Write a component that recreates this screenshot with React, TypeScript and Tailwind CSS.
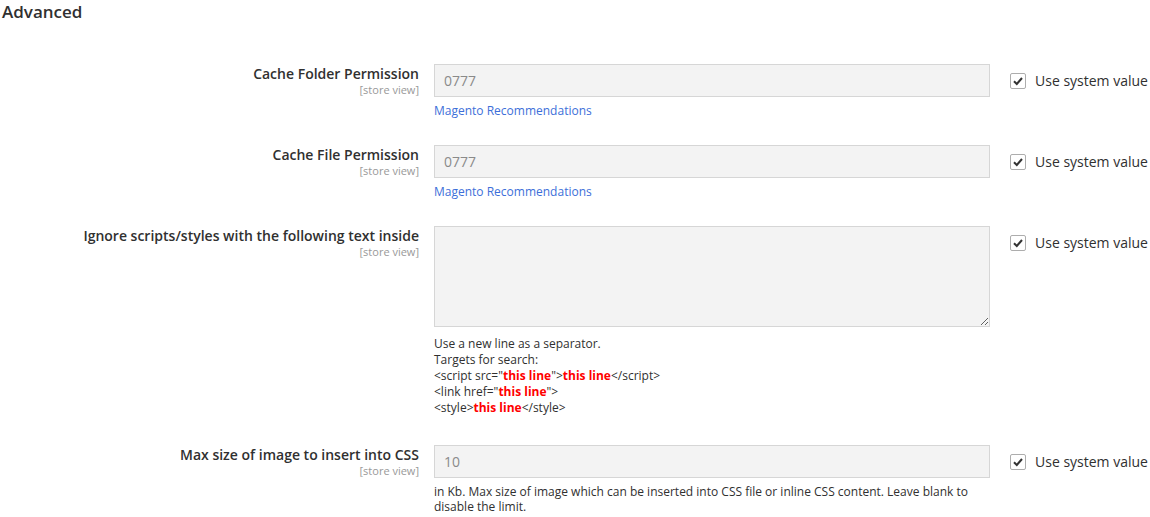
import React from 'react';

const font = { fontFamily: '"Open Sans", "Liberation Sans", sans-serif' };

function Checkbox() {
    return (
        <label className="flex items-center gap-[9px] text-[14px] text-[#303030] whitespace-nowrap">
            <span className="w-[16px] h-[16px] border border-[#adadad] rounded-[2px] bg-white flex items-center justify-center">
                <svg width="12" height="12" viewBox="0 0 12 12">
                    <path d="M2 6.2 L4.8 9 L10 3" fill="none" stroke="#333" strokeWidth="2" />
                </svg>
            </span>
            Use system value
        </label>
    );
}

function Label({ title }: { title: string }) {
    return (
        <div className="w-[419px] shrink-0 text-right">
            <div className="text-[14px] font-semibold text-[#303030] leading-[20px]">{title}</div>
            <div className="text-[11px] text-[#999] leading-[12px]">[store view]</div>
        </div>
    );
}

function Row({
    title,
    children,
    note,
    className,
}: {
    title: string;
    children: React.ReactNode;
    note?: React.ReactNode;
    className?: string;
}) {
    return (
        <div className={`flex ${className ?? ''}`}>
            <Label title={title} />
            <div className="ml-[15px] w-[556px] shrink-0">
                {children}
                {note}
            </div>
            <div className="ml-[20px] pt-[6px]">
                <Checkbox />
            </div>
        </div>
    );
}

function Input({ value }: { value: string }) {
    return (
        <input
            disabled
            value={value}
            readOnly
            className="w-[556px] h-[33px] border border-[#d6d6d6] bg-[#f3f3f3] px-[9px] text-[14px] text-[#8a8a8a]"
            style={font}
        />
    );
}

function Hl({ children }: { children: React.ReactNode }) {
    return <span className="font-bold text-[#ff0000]">{children}</span>;
}

function Recommendations() {
    return (
        <a href="#" className="block mt-[6px] text-[12px] leading-[16px] text-[#3d6fd9]">
            Magento Recommendations
        </a>
    );
}

export default function App() {
    return (
        <div className="w-[1150px] h-[517px] bg-white overflow-hidden" style={font}>
            <h2 className="pl-[2px] text-[17px] font-semibold text-[#303030] leading-[24px]">Advanced</h2>

            <div className="mt-[40px]">
                <Row title="Cache Folder Permission" className="mb-[26px]" note={<Recommendations />}>
                    <Input value="0777" />
                </Row>

                <Row title="Cache File Permission" className="mb-[26px]" note={<Recommendations />}>
                    <Input value="0777" />
                </Row>

                <Row
                    title="Ignore scripts/styles with the following text inside"
                    className="mb-[29px]"
                    note={
                        <div className="mt-[9px] text-[12px] leading-[16px] text-[#303030]">
                            <div>Use a new line as a separator.</div>
                            <div>Targets for search:</div>
                            <div>
                                &lt;script src="<Hl>this line</Hl>"&gt;<Hl>this line</Hl>&lt;/script&gt;
                            </div>
                            <div>
                                &lt;link href="<Hl>this line</Hl>"&gt;
                            </div>
                            <div>
                                &lt;style&gt;<Hl>this line</Hl>&lt;/style&gt;
                            </div>
                        </div>
                    }
                >
                    <textarea
                        disabled
                        className="block w-[556px] h-[101px] border border-[#d6d6d6] bg-[#f3f3f3]"
                        style={{ resize: 'vertical' }}
                    />
                </Row>

                <Row
                    title="Max size of image to insert into CSS"
                    note={
                        <div className="mt-[6px] text-[12px] leading-[15px] text-[#303030]">
                            in Kb. Max size of image which can be inserted into CSS file or inline CSS content. Leave blank to disable the limit.
                        </div>
                    }
                >
                    <Input value="10" />
                </Row>
            </div>
        </div>
    );
}
